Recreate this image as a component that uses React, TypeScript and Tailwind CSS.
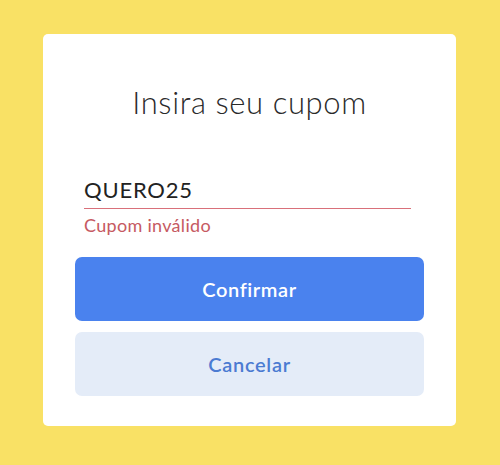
import React, { useState } from "react";

const App = () => {
  const [code, setCode] = useState("QUERO25");

  return (
    <div className="flex h-[465px] w-full bg-[#f9e165] pl-[43px] pt-[34px] font-['Lato',sans-serif]">
      <div className="flex h-[392px] w-[413px] flex-col rounded-[5px] bg-white px-8 pt-[50px]">
        <h1 className="text-center text-[31px] font-light leading-[36px] tracking-[0.6px] text-[#2a2a2a]">
          Insira seu cupom
        </h1>

        <div className="ml-[9px] mr-[13px] mt-[57px] border-b border-[#d9707a] pb-1">
          <input
            value={code}
            onChange={(e) => setCode(e.target.value)}
            className="w-full bg-transparent text-[22px] leading-[26px] tracking-[0.8px] text-[#222] outline-none"
          />
        </div>
        <p className="ml-[9px] mt-[5px] text-[18px] leading-[22px] tracking-[0.3px] text-[#c65a62]">Cupom inválido</p>

        <div className="mt-[21px] flex flex-col gap-[11px]">
          <button className="h-16 w-full rounded-[7px] bg-[#4a82ee] text-[20px] font-semibold tracking-[0.6px] text-white">
            Confirmar
          </button>
          <button className="h-16 w-full rounded-[7px] bg-[#e4ecf8] text-[20px] font-semibold tracking-[0.7px] text-[#4b7bd2]">
            Cancelar
          </button>
        </div>
      </div>
    </div>
  );
};

export default App;
